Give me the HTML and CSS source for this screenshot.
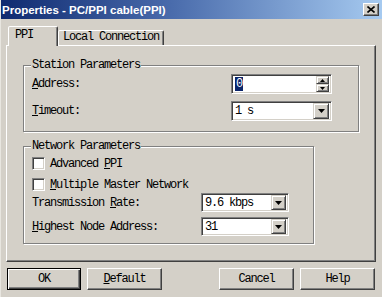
FILE: index.html
```html
<!DOCTYPE html>
<html>
<head>
<meta charset="utf-8">
<link rel="stylesheet" href="styles.css">
</head>
<body>
<div class="window">
  <div class="titlebar">
    <span class="title">Properties - PC/PPI cable(PPI)</span>
    <span class="close"><svg width="8" height="7" viewBox="0 0 8 7"><path d="M0.5 0.5 L7.5 6.5 M7.5 0.5 L0.5 6.5" stroke="#000" stroke-width="1.6" fill="none"/></svg></span>
  </div>
  <div class="tabs">
    <div class="tab active">PPI</div>
    <div class="tab local">Local Connection</div>
  </div>
  <div class="panel">
    <div class="group station">
      <span class="legend">Station Parameters</span>
      <div class="rows">
        <div class="row">
          <span class="label"><u>A</u>ddress:</span>
          <div class="field big">
            <span class="value"><span class="sel">0</span></span>
            <span class="spin">
              <span class="sbtn"><svg width="5" height="3" viewBox="0 0 5 3"><path d="M2.5 0 L5 3 L0 3 Z" fill="#000"/></svg></span>
              <span class="sbtn"><svg width="5" height="3" viewBox="0 0 5 3"><path d="M0 0 L5 0 L2.5 3 Z" fill="#000"/></svg></span>
            </span>
          </div>
        </div>
        <div class="row">
          <span class="label"><u>T</u>imeout:</span>
          <div class="field big">
            <span class="value">1 s</span>
            <span class="drop"><svg width="7" height="4" viewBox="0 0 7 4"><path d="M0 0 L7 0 L3.5 4 Z" fill="#000"/></svg></span>
          </div>
        </div>
      </div>
    </div>
    <div class="group network">
      <span class="legend">Network Parameters</span>
      <div class="check first"><span class="box"></span><span>Advanced <u>P</u>PI</span></div>
      <div class="check second"><span class="box"></span><span><u>M</u>ultiple Master Network</span></div>
      <div class="row2">
        <span class="label">Transmission <u>R</u>ate:</span>
        <div class="field small">
          <span class="value">9.6 kbps</span>
          <span class="drop"><svg width="7" height="4" viewBox="0 0 7 4"><path d="M0 0 L7 0 L3.5 4 Z" fill="#000"/></svg></span>
        </div>
      </div>
      <div class="row2">
        <span class="label"><u>H</u>ighest Node Address:</span>
        <div class="field small">
          <span class="value">31</span>
          <span class="drop"><svg width="7" height="4" viewBox="0 0 7 4"><path d="M0 0 L7 0 L3.5 4 Z" fill="#000"/></svg></span>
        </div>
      </div>
    </div>
  </div>
  <div class="buttons">
    <span class="btn default">OK</span>
    <span class="btn"><span><u>D</u>efault</span></span>
    <span class="spacer"></span>
    <span class="btn">Cancel</span>
    <span class="btn">Help</span>
  </div>
</div>
</body>
</html>
```

FILE: styles.css
```css
* { box-sizing: border-box; }
body {
  margin: 0;
  background: #d4d0c8;
  font-family: "Liberation Mono", "DejaVu Sans Mono", monospace;
  font-size: 12px;
  letter-spacing: -1.2px;
  color: #000;
}
u { text-decoration: underline; text-underline-offset: 1px; }
.window {
  width: 382px;
  height: 297px;
  overflow: hidden;
  border-left: 1px solid #e8e6e0;
}
.titlebar {
  height: 19px;
  background: linear-gradient(90deg, #0f2a70 0%, #4a6cac 45%, #a6caf0 100%);
  display: flex;
  align-items: center;
  justify-content: space-between;
  padding: 0 3px 0 1px;
}
.title {
  font-family: "Liberation Sans", Arial, sans-serif;
  font-weight: bold;
  font-size: 11.5px;
  letter-spacing: 0;
  color: #fff;
}
.close {
  width: 16px;
  height: 13px;
  background: #d4d0c8;
  border: 1px solid;
  border-color: #fff #404040 #404040 #fff;
  box-shadow: inset -1px -1px 0 #808080;
  display: flex;
  align-items: center;
  justify-content: center;
}
.tabs {
  display: flex;
  align-items: flex-end;
  height: 19px;
  margin: 7px 0 0 7px;
  position: relative;
  z-index: 1;
}
.tab {
  height: 15px;
  border: 1px solid;
  border-bottom: none;
  border-color: #fff #404040 transparent #fff;
  box-shadow: inset -1px 0 0 #808080;
  border-radius: 2px 2px 0 0;
  background: #d4d0c8;
  line-height: 13px;
}
.tab.active {
  width: 50px;
  height: 20px;
  margin-bottom: -1px;
  padding: 2px 0 0 6px;
}
.tab.local {
  width: 106px;
  padding-left: 4px;
}
.panel {
  margin-left: 5px;
  width: 370px;
  height: 217px;
  border: 1px solid;
  border-color: #fff #404040 #404040 #fff;
  box-shadow: inset -1px -1px 0 #808080;
  padding: 19px 0 0 16px;
}
.group {
  position: relative;
  border: 1px solid #808080;
  box-shadow: inset 1px 1px 0 #fff, 1px 1px 0 #fff;
}
.legend {
  position: absolute;
  top: -8px;
  left: 7px;
  padding: 0 1px;
  background: #d4d0c8;
  line-height: 14px;
}
.station {
  width: 336px;
  height: 67px;
  padding: 8px 0 0 8px;
}
.rows {
  display: flex;
  flex-direction: column;
  gap: 7px;
}
.row {
  display: grid;
  grid-template-columns: 199px 101px;
  align-items: center;
}
.field {
  background: #fff;
  border: 1px solid;
  border-color: #808080 #fff #fff #808080;
  box-shadow: inset 1px 1px 0 #404040, inset -1px -1px 0 #d4d0c8;
  display: flex;
  align-items: center;
  padding: 2px;
}
.field.big { height: 20px; }
.field.small { height: 19px; width: 88px; }
.value {
  flex: 1;
  padding-left: 1px;
  line-height: 14px;
}
.sel {
  background: #0a246a;
  color: #fff;
  padding: 0 1px;
}
.spin {
  display: flex;
  flex-direction: column;
  width: 13px;
  height: 16px;
}
.sbtn, .drop {
  background: #d4d0c8;
  border: 1px solid;
  border-color: #d4d0c8 #404040 #404040 #d4d0c8;
  box-shadow: inset 1px 1px 0 #fff, inset -1px -1px 0 #808080;
  display: flex;
  align-items: center;
  justify-content: center;
}
.sbtn { height: 8px; }
.drop { width: 16px; height: 16px; }
.field.small .drop { width: 15px; height: 15px; }
.network {
  width: 291px;
  height: 98px;
  margin-top: 14px;
  padding: 10px 0 0 8px;
}
.check {
  display: flex;
  align-items: center;
  gap: 5px;
  height: 13px;
}
.check.first { margin-bottom: 8px; }
.check.second { margin-bottom: 2px; }
.box {
  width: 13px;
  height: 13px;
  background: #fff;
  border: 1px solid;
  border-color: #808080 #fff #fff #808080;
  box-shadow: inset 1px 1px 0 #404040, inset -1px -1px 0 #d4d0c8;
}
.row2 {
  display: grid;
  grid-template-columns: 169px 88px;
  align-items: center;
  margin-bottom: 5px;
}
.buttons {
  display: flex;
  gap: 6px;
  padding: 0 7px 0 6px;
  margin-top: 6px;
}
.spacer { flex: 1; }
.btn {
  width: 75px;
  height: 22px;
  border: 1px solid;
  border-color: #fff #404040 #404040 #fff;
  box-shadow: inset -1px -1px 0 #808080;
  background: #d4d0c8;
  display: flex;
  align-items: center;
  justify-content: center;
}
.btn.default {
  width: 74px;
  border-color: #000;
  box-shadow: inset 1px 1px 0 #fff, inset -1px -1px 0 #404040, inset -2px -2px 0 #808080;
}
```
